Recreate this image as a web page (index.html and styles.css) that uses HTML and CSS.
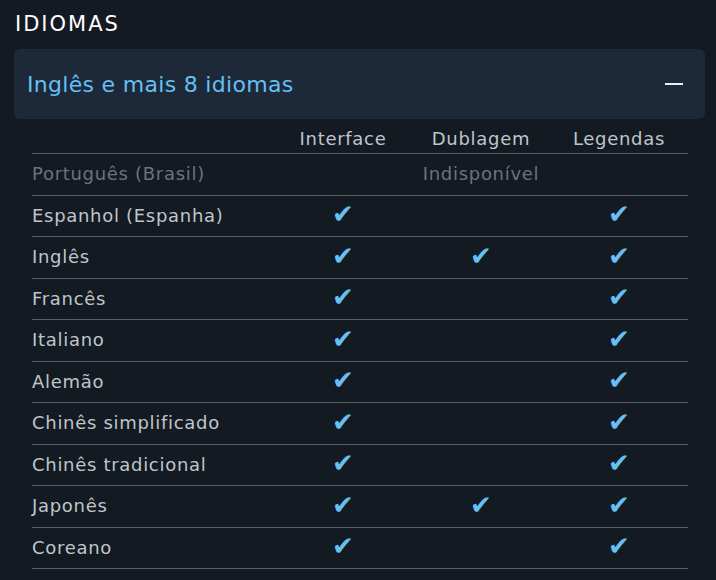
FILE: index.html
```html
<!DOCTYPE html>
<html lang="pt-BR">
<head>
<meta charset="utf-8">
<link rel="stylesheet" href="styles.css">
</head>
<body>
<section class="langs">
  <h2 class="title">IDIOMAS</h2>
  <div class="summary">
    <span class="summary-text">Inglês e mais 8 idiomas</span>
    <span class="minus"></span>
  </div>
  <table class="grid">
    <thead>
      <tr><th class="name"></th><th>Interface</th><th>Dublagem</th><th>Legendas</th></tr>
    </thead>
    <tbody>
      <tr class="off"><td class="name">Português (Brasil)</td><td colspan="3" class="na">Indisponível</td></tr>
      <tr><td class="name">Espanhol (Espanha)</td><td><span class="ck">✔</span></td><td></td><td><span class="ck">✔</span></td></tr>
      <tr><td class="name">Inglês</td><td><span class="ck">✔</span></td><td><span class="ck">✔</span></td><td><span class="ck">✔</span></td></tr>
      <tr><td class="name">Francês</td><td><span class="ck">✔</span></td><td></td><td><span class="ck">✔</span></td></tr>
      <tr><td class="name">Italiano</td><td><span class="ck">✔</span></td><td></td><td><span class="ck">✔</span></td></tr>
      <tr><td class="name">Alemão</td><td><span class="ck">✔</span></td><td></td><td><span class="ck">✔</span></td></tr>
      <tr><td class="name">Chinês simplificado</td><td><span class="ck">✔</span></td><td></td><td><span class="ck">✔</span></td></tr>
      <tr><td class="name">Chinês tradicional</td><td><span class="ck">✔</span></td><td></td><td><span class="ck">✔</span></td></tr>
      <tr><td class="name">Japonês</td><td><span class="ck">✔</span></td><td><span class="ck">✔</span></td><td><span class="ck">✔</span></td></tr>
      <tr><td class="name">Coreano</td><td><span class="ck">✔</span></td><td></td><td><span class="ck">✔</span></td></tr>
    </tbody>
  </table>
</section>
</body>
</html>
```
FILE: styles.css
```css
html, body {
  margin: 0;
  padding: 0;
  background: #141a22;
  font-family: "DejaVu Sans", sans-serif;
}
.langs {
  padding: 8px 11px 0 14px;
}
.title {
  margin: 0 0 0 1px;
  padding-top: 1px;
  font-size: 21px;
  letter-spacing: 2px;
  font-weight: 400;
  color: #ffffff;
  line-height: 30px;
  height: 40px;
}
.summary {
  height: 70px;
  background: #1d2938;
  border-radius: 6px;
  display: flex;
  align-items: center;
  justify-content: space-between;
  padding: 0 22px 0 13px;
}
.summary-text {
  color: #66c0f4;
  font-size: 22px;
  letter-spacing: 0.3px;
  line-height: 26px;
  padding-top: 2px;
}
.minus {
  width: 18px;
  height: 2px;
  background: #e8eef3;
}
.grid {
  margin: 2px 0 0 18px;
  width: 656px;
  border-collapse: collapse;
  font-size: 18px;
  letter-spacing: 0.7px;
  color: #bfc5cb;
}
.grid th {
  font-weight: 400;
  height: 30px;
  padding: 2px 0 0;
  text-align: center;
  width: 138px;
  color: #bfc5cb;
  border-bottom: 1px solid #5a6068;
  vertical-align: middle;
}
.grid th.name {
  width: auto;
}
.grid td {
  height: 40.5px;
  padding: 0;
  line-height: 20px;
  text-align: center;
  border-bottom: 1px solid #5a6068;
  vertical-align: middle;
}
.grid td.name {
  text-align: left;
}
.off td {
  color: #6a737d;
}
.ck {
  color: #66c0f4;
  font-family: "DejaVu Sans", sans-serif;
  font-size: 26px;
  letter-spacing: 0;
  line-height: 20px;
}
```
